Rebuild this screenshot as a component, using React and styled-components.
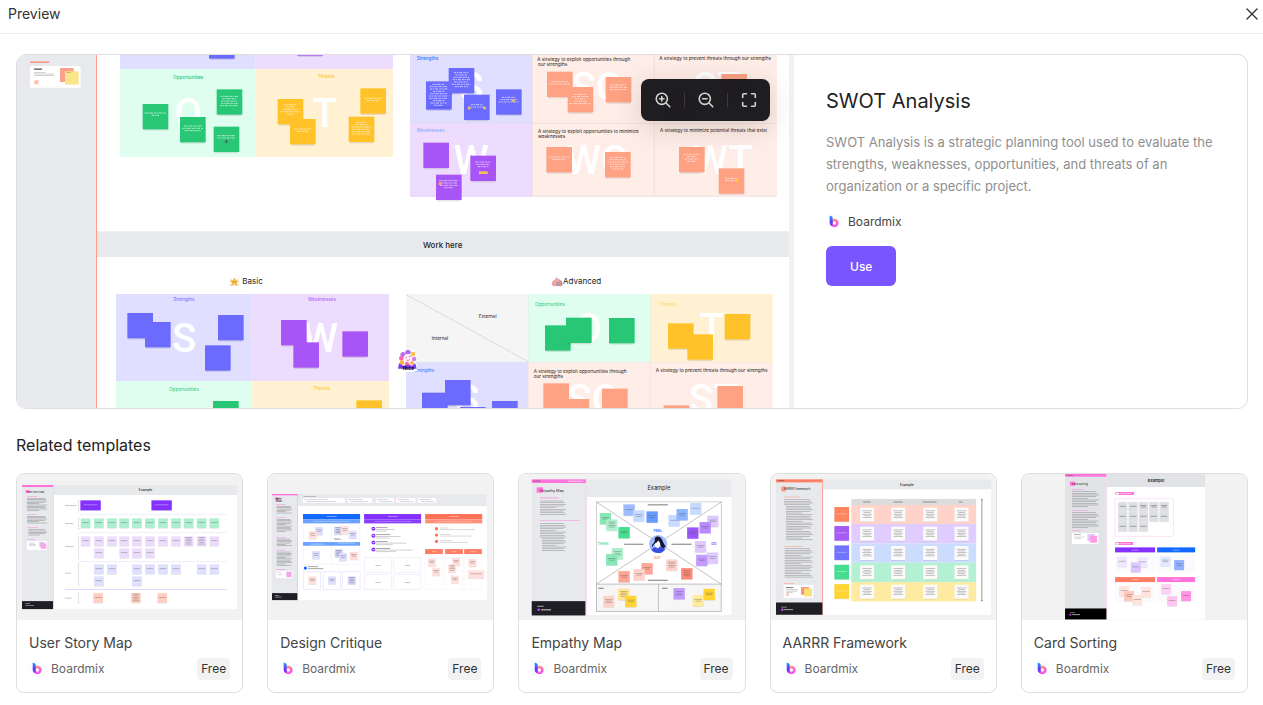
import React from "react";
import styled, { createGlobalStyle } from "styled-components";

const GlobalStyle = createGlobalStyle`
  * { box-sizing: border-box; }
  body {
    margin: 0;
    background: #fff;
    color: #222;
    font-family: Inter, "Liberation Sans", sans-serif;
  }
  button { font-family: inherit; cursor: pointer; }
  h1, h2, h3, p { margin: 0; font-weight: 400; }
  svg { display: block; }
`;

/* ---------- page parts ---------- */

const Header = styled.header`
  display: flex;
  align-items: center;
  justify-content: space-between;
  height: 34px;
  padding: 0 3px 5px 8px;
  border-bottom: 1px solid #ececec;
`;

const HeaderTitle = styled.h1`
  font-size: 14px;
  line-height: 28px;
  color: #333;
`;

const CloseButton = styled.button`
  display: flex;
  align-items: center;
  justify-content: center;
  width: 16px;
  height: 28px;
  padding: 0;
  border: 0;
  background: none;
  color: #333;
`;

const Main = styled.main`
  padding: 20px 15px 12px 16px;
`;

const Preview = styled.section`
  display: flex;
  border: 1px solid #dedede;
  border-radius: 10px;
  overflow: hidden;
`;

const BoardArea = styled.div`
  position: relative;
  flex: 1;
  min-width: 0;
  overflow: hidden;
`;

const BoardSvg = styled.svg`
  width: 100%;
  aspect-ratio: 777 / 353;
`;

const Toolbar = styled.div`
  position: absolute;
  top: 24px;
  right: 24px;
  display: flex;
  align-items: center;
  height: 42px;
  border-radius: 8px;
  background: rgba(25, 25, 29, 0.98);
  box-shadow: 0 6px 30px rgba(0, 0, 0, 0.15);
`;

const ToolButton = styled.button`
  display: flex;
  align-items: center;
  justify-content: center;
  width: 43px;
  height: 14px;
  padding: 0;
  border: 0;
  background: none;
  color: #d2d2d2;

  & + & { border-left: 1px solid #3a393c; }
`;

const Details = styled.aside`
  flex: 0 0 453px;
  padding: 32px;
`;

const DetailsTitle = styled.h2`
  font-size: 20px;
  line-height: 28px;
  color: #222;
`;

const Description = styled.p`
  margin-top: 16px;
  font-size: 13px;
  line-height: 22px;
  color: #8f8f8f;
`;

const Author = styled.div`
  display: flex;
  align-items: center;
  gap: 6px;
  font-size: 12px;
  line-height: 20px;
  color: ${(p) => (p.$soft ? "#666" : "#444")};
`;

const AuthorBlock = styled.div`
  margin: 15px 0 14px;
`;

const UseButton = styled.button`
  height: 40px;
  padding: 0 24px;
  border: 0;
  border-radius: 6px;
  background: #7855ff;
  color: #fff;
  font-size: 12px;
  font-weight: 500;
`;

const RelatedTitle = styled.h2`
  margin: 24px 0 16px;
  font-size: 16px;
  line-height: 24px;
  color: #222;
`;

const CardGrid = styled.div`
  display: grid;
  grid-template-columns: repeat(5, minmax(0, 1fr));
  gap: 24px;
`;

const Card = styled.article`
  border: 1px solid #dedede;
  border-radius: 8px;
  overflow: hidden;
`;

const ThumbSvg = styled.svg`
  width: 100%;
  aspect-ratio: 225 / 146;
  background: #f2f2f2;
`;

const CardBody = styled.div`
  padding: 12px;
`;

const CardTitle = styled.h3`
  margin-bottom: 4px;
  font-size: 14px;
  line-height: 22px;
  color: #444;
`;

const CardRow = styled.div`
  display: flex;
  align-items: center;
  justify-content: space-between;
`;

const Badge = styled.span`
  padding: 0 4px;
  border-radius: 4px;
  background: #f2f2f2;
  font-size: 12px;
  line-height: 22px;
  color: #333;
`;

/* ---------- icons ---------- */

const CloseIcon = () => (
  <svg width="12" height="12" viewBox="0 0 12 12" fill="none" stroke="currentColor" strokeWidth="1.4" strokeLinecap="round">
    <path d="M1 1l10 10M11 1L1 11" />
  </svg>
);

const ZoomIcon = ({ plus }) => (
  <svg width="16" height="16" viewBox="0 0 16 16" fill="none" stroke="currentColor" strokeWidth="1.6" strokeLinecap="round" strokeLinejoin="round">
    <circle cx="6.800" cy="6.800" r="5.600" />
    <path d={plus ? "M11 11l3.800 3.800M4.600 6.800h4.400M6.800 4.600v4.400" : "M11 11l3.800 3.800M4.600 6.800h4.400"} />
  </svg>
);

const FullscreenIcon = () => (
  <svg width="16" height="16" viewBox="0 0 16 16" fill="none" stroke="currentColor" strokeWidth="1.6" strokeLinecap="round" strokeLinejoin="round">
    <path d="M1.700 5.500V2.700q0-1 1-1h2.800M10.500 1.700h2.800q1 0 1 1v2.800M14.300 10.500v2.800q0 1-1 1h-2.800M5.500 14.300H2.700q-1 0-1-1v-2.800" />
  </svg>
);

const BoardmixLogo = () => (
  <svg width="16" height="16" viewBox="0 0 48 48" aria-hidden="true">
    <defs>
      <linearGradient id="logoStem" x1="0" y1="0" x2="0" y2="1">
        <stop offset="0" stopColor="#2196ff" />
        <stop offset="0.6" stopColor="#5b3dfa" />
        <stop offset="1" stopColor="#8a45f0" />
      </linearGradient>
      <linearGradient id="logoBowl" x1="0" y1="0" x2="0.3" y2="1">
        <stop offset="0" stopColor="#ff9a6b" />
        <stop offset="0.5" stopColor="#ff66c4" />
        <stop offset="1" stopColor="#f45be8" />
      </linearGradient>
    </defs>
    <circle cx="24" cy="24" r="22.500" fill="#fff" stroke="#f2f2f2" strokeWidth="2" />
    <circle cx="25" cy="27" r="9" fill="none" stroke="url(#logoBowl)" strokeWidth="8" />
    <path d="M11 5q9 0 9 8v19q-2 4-4 4q-5-3-5-9z" fill="url(#logoStem)" />
  </svg>
);

/* ---------- drawing helpers ---------- */

const BLUE = "#6b6bff";
const GREEN = "#28c776";
const YELLOW = "#ffc329";
const PURPLE = "#a855f7";
const CORAL = "#ffa183";

const Box = ({ a, f, r = 0, s, o }) => (
  <rect x={a[0]} y={a[1]} width={a[2]} height={a[3]} fill={f} rx={r} stroke={s} opacity={o} strokeWidth={s ? 2 : 0} />
);

/* Rows of greeked copy: left aligned, or centred on x when mid is set. */
const Lines = ({ x, y, w, gap = 6, h = 3, c = "#777", o = 0.6, mid }) => (
  <g fill={c} opacity={o}>
    {w.map((n, i) => (
      <rect key={i} x={mid ? x - n / 2 : x} y={y + i * gap} width={n} height={h} />
    ))}
  </g>
);

const Sticky = ({ x, y, c, w = [], t = 20 }) => (
  <g>
    <rect x={x + 3} y={y + 4} width="71" height="76" fill="#000" opacity="0.1" />
    <rect x={x} y={y} width="77" height="76" fill={c} />
    <g stroke="#fff" strokeOpacity="0.6" strokeWidth="3" strokeDasharray="7 2 4 2 10 3">
      {w.map((n, i) => (
        <path key={i} d={`M${x + 38 - n / 2} ${y + t + i * 7}h${n}`} />
      ))}
    </g>
  </g>
);

const Mark = ({ x, y, children }) => (
  <text x={x} y={y} fontFamily="Roboto, sans-serif" fontSize="120" fontWeight="500" fill="#fff" textAnchor="middle">{children}</text>
);

const Label = ({ x, y, c = "#222", size = 14, weight = 400, children }) => (
  <text x={x} y={y} fontSize={size} fontWeight={weight} fill={c}>{children}</text>
);

const Notes = ({ items, w = 30, h = w, text = "#555" }) => (
  <g>
    {items.map(([x, y, c, n = 2], i) => (
      <g key={i}>
        <rect x={x + 1} y={y + 2} width={w - 2} height={h} fill="#000" opacity="0.1" />
        <rect x={x} y={y} width={w} height={h} fill={c} />
        <Lines mid x={x + w / 2} y={y + h / 2 - n * 2.5} w={Array.from({ length: n }, (_, k) => w * (k % 2 ? 0.5 : 0.68))} gap={5} h={2} c={text} o={0.5} />
      </g>
    ))}
  </g>
);

/* ---------- main board ---------- */

function Board() {
  return (
    <BoardSvg viewBox="51 165 2331 1059" preserveAspectRatio="xMinYMin slice" role="img" aria-label="SWOT Analysis board">
      <Box a={[51, 165, 2334, 1059]} f="#fff" />
      <Box a={[51, 165, 237, 1059]} f="#e8e9ed" />
      <Box a={[288, 165, 3, 1059]} f="#ff9d8a" />
      <Box a={[2367, 165, 15, 1059]} f="#f2f2f3" />

      <g transform="translate(0 120)">
        <Lines x={90} y={64} w={[58]} h={5} c="#ff7a63" o={0.7} />
        <Box a={[90, 78, 152, 65]} f="#fff" r={5} />
        <Lines x={102} y={85} w={[24]} h={5} c="#222" />
        <Lines x={102} y={97} w={[34, 61, 60]} h={2} gap={4} o={0.5} />
        <Box a={[102, 120, 14, 14]} f="#ffd5cc" />
        <Box a={[107, 125, 5, 4]} f="#ff8f78" />
        <Box a={[180, 84, 41, 42]} f="#ffa08d" />
        <Box a={[195, 94, 41, 40]} f="#fbe58a" />
        <Lines x={199} y={97} w={[14]} h={2} c="#8a7a30" />

        <Box a={[360, 30, 407, 57]} f="#e0dfff" />
        <Box a={[767, 30, 412, 57]} f="#eddcfd" />
        <Box a={[360, 87, 407, 264]} f="#e0fef0" />
        <Box a={[767, 87, 412, 264]} f="#fff1d2" />
        <Sticky x={627} y={-20} c={BLUE} />
        <Sticky x={892} y={-29} c={PURPLE} />
        <Label x={519} y={118} c={GREEN} weight={500}>Opportunities</Label>
        <Label x={953} y={113} c={YELLOW} weight={500}>Threats</Label>
        <Mark x={564} y={261}>O</Mark>
        <Mark x={974} y={261}>T</Mark>
        <Sticky x={428} y={192} c={GREEN} w={[64, 22]} t={27} />
        <Sticky x={540} y={231} c={GREEN} w={[52, 62, 48]} t={27} />
        <Sticky x={650} y={148} c={GREEN} w={[54, 42, 48, 50, 56]} t={21} />
        <Sticky x={641} y={260} c={GREEN} w={[56, 54]} t={27} />
        <path d="M677 300h4v5l4 3h-12l4-3z" fill="#555" />
        <Sticky x={833} y={177} c={YELLOW} w={[38, 24, 46, 60, 20]} t={17} />
        <Sticky x={870} y={237} c={YELLOW} w={[50, 36]} t={30} />
        <Sticky x={1081} y={145} c={YELLOW} w={[50, 38]} t={30} />
        <Sticky x={1046} y={230} c={YELLOW} w={[30, 38, 60, 58, 54, 58]} t={17} />
      </g>

      <g transform="translate(1200 120)">
        <Box a={[30, 30, 366, 220]} f="#e0dfff" />
        <Box a={[30, 250, 366, 220]} f="#eddcfd" />
        <Box a={[396, 30, 735, 440]} f="#ffede7" />
        <path d="M30 250H1131M396 30V470M763 30V470M30 469H1131" stroke="#b9a9c9" strokeOpacity="0.3" strokeWidth="2" fill="none" />
        <Label x={50} y={61} c="#2a78ff" weight={500}>Strengths</Label>
        <Label x={50} y={277} c="#7ea3f5">Weaknesses</Label>
        <Mark x={213} y={184}>S</Mark>
        <Mark x={592} y={184}>SO</Mark>
        <Mark x={952} y={184}>ST</Mark>
        <Mark x={213} y={402}>W</Mark>
        <Mark x={592} y={402}>WO</Mark>
        <Mark x={968} y={402}>WT</Mark>
        <Label x={412} y={62}>A strategy to exploit opportunities through</Label>
        <Label x={414} y={77}>our strengths</Label>
        <Label x={778} y={59}>A strategy to prevent threats through our strengths</Label>
        <Label x={414} y={278}>A strategy to exploit opportunities to minimize</Label>
        <Label x={414} y={294}>weaknesses</Label>
        <Label x={780} y={276}>A strategy to minimize potential threats that exist</Label>
        <Sticky x={78} y={133} c={BLUE} />
        <Sticky x={78} y={124} c={BLUE} w={[38, 56, 52, 34, 50, 58, 56, 34, 48, 28]} t={9} />
        <Sticky x={146} y={84} c={BLUE} w={[44, 36, 48, 52, 44, 58, 40]} t={14} />
        <Sticky x={192} y={164} c={BLUE} w={[34, 54]} t={30} />
        <Box a={[204, 202, 8, 6]} f="#ffc93c" />
        <Box a={[250, 202, 8, 6]} f="#ffc93c" />
        <Sticky x={288} y={148} c={BLUE} w={[40, 48, 60]} t={24} />
        <Box a={[336, 179, 8, 6]} f="#ffc93c" />
        <Sticky x={441} y={95} c={CORAL} w={[50, 62]} t={30} />
        <Sticky x={503} y={141} c={CORAL} w={[38, 50, 32, 40, 66]} t={22} />
        <Sticky x={617} y={111} c={CORAL} w={[46, 54, 50]} t={24} />
        <Sticky x={964} y={102} c={CORAL} />
        <Sticky x={804} y={159} c={CORAL} />
        <Sticky x={70} y={308} c={PURPLE} />
        <Sticky x={108} y={404} c={PURPLE} w={[58, 56, 52, 26]} t={18} />
        <Box a={[116, 427, 9, 8]} f="#ffb03c" />
        <Sticky x={211} y={347} c={PURPLE} w={[46, 40, 32]} t={19} />
        <Box a={[237, 394, 26, 8]} f="#f3c05c" />
        <Sticky x={439} y={321} c={CORAL} w={[60, 40]} t={30} />
        <Sticky x={615} y={336} c={CORAL} w={[46, 50, 62, 46, 46, 34]} t={16} />
        <Sticky x={837} y={321} c={CORAL} w={[48, 28, 42, 28]} t={22} />
        <Sticky x={956} y={385} c={CORAL} w={[38, 36]} t={30} />
        <circle cx="1011" cy="422" r="5" fill="#ffc93c" />
      </g>

      <Box a={[291, 694, 2076, 77]} f="#e8e9ed" />

      <g transform="translate(0 660)">
        <path d="M703 174l3.500 8 9 1-7 5 3 9-8.500-4.500-8.500 4.500 3-9-7-5 9-1z" fill="#fbc43c" stroke="#e5ad45" strokeWidth="2" />
        <path d="M700 184v3M707 184v3" stroke="#432" strokeWidth="2" />
        <path d="M692 176l3 3M714 176l-3 3M690 196l4-3M716 196l-4-3" stroke="#c9a25a" strokeWidth="2" />
        <Label x={727} y={192} size={24}>Basic</Label>
        <Box a={[348, 222, 407, 261]} f="#e0dfff" />
        <Box a={[755, 222, 412, 261]} f="#eddcfd" />
        <Box a={[348, 483, 407, 90]} f="#e0fef0" />
        <Box a={[755, 483, 412, 90]} f="#fff1d2" />
        <Label x={520} y={242} c={BLUE}>Strengths</Label>
        <Label x={924} y={242} c={PURPLE}>Weaknesses</Label>
        <Label x={507} y={513} c={GREEN}>Opportunities</Label>
        <Label x={940} y={510} c={YELLOW}>Threats</Label>
        <Mark x={552} y={395}>S</Mark>
        <Mark x={961} y={395}>W</Mark>
        <Sticky x={382} y={279} c={BLUE} />
        <Sticky x={435} y={306} c={BLUE} />
        <Sticky x={654} y={285} c={BLUE} />
        <Sticky x={615} y={376} c={BLUE} />
        <Sticky x={843} y={300} c={PURPLE} />
        <Sticky x={880} y={367} c={PURPLE} />
        <Sticky x={1027} y={334} c={PURPLE} />
        <Sticky x={639} y={543} c={GREEN} />
        <Sticky x={1069} y={541} c={YELLOW} />
      </g>

      <g transform="translate(1185 660)">
        <Label x={84} y={83} size={24} weight={500}>Work here</Label>
        <path d="M472 192q2-12 9-13l4-6 7 8q8 3 9 9v7h-27z" fill="#f2a7a0" stroke="#c98a90" strokeWidth="2" />
        <path d="M486 188h9v6h-9z" fill="#dfe4ff" stroke="#6b5d98" strokeWidth="2" />
        <path d="M493 179l6 4 2 14" stroke="#4b3d78" strokeWidth="2" strokeDasharray="4 3" fill="none" />
        <Label x={504} y={192} size={24}>Advanced</Label>
        <Box a={[33, 222, 367, 205]} f="#f5f5f5" />
        <path d="M36 225L398 424" stroke="#b5b5b5" strokeWidth="2" strokeDasharray="5 3" />
        <Box a={[400, 222, 367, 205]} f="#e0fef0" />
        <Box a={[767, 222, 366, 205]} f="#fff1d2" />
        <Box a={[33, 427, 367, 140]} f="#e0dfff" />
        <Box a={[400, 427, 733, 140]} f="#ffede7" />
        <path d="M400 222V567M766 222V567M33 427H1133" stroke="#b9a9c9" strokeOpacity="0.2" strokeWidth="2" fill="none" />
        <Label x={251} y={294}>External</Label>
        <Label x={110} y={361}>Internal</Label>
        <Label x={420} y={259} c={GREEN}>Opportunities</Label>
        <Label x={794} y={258} c="#ffd76b">Threats</Label>
        <Label x={54} y={457} c="#2a78ff">Strengths</Label>
        <Mark x={579} y={367}>O</Mark>
        <Mark x={950} y={367}>T</Mark>
        <Mark x={216} y={580}>S</Mark>
        <Mark x={595} y={580}>SO</Mark>
        <Mark x={955} y={580}>ST</Mark>
        <Label x={416} y={458}>A strategy to exploit opportunities through</Label>
        <Label x={416} y={473}>our strengths</Label>
        <Label x={782} y={455}>A strategy to prevent threats through our strengths</Label>
        <Sticky x={450} y={316} c={GREEN} />
        <Sticky x={513} y={293} c={GREEN} />
        <Sticky x={642} y={294} c={GREEN} />
        <Sticky x={819} y={310} c={YELLOW} />
        <Sticky x={877} y={343} c={YELLOW} />
        <Sticky x={989} y={282} c={YELLOW} />
        <Sticky x={81} y={518} c={BLUE} />
        <Sticky x={150} y={480} c={BLUE} />
        <Sticky x={195} y={561} c={BLUE} />
        <Sticky x={291} y={543} c={BLUE} />
        <Sticky x={445} y={490} c={CORAL} />
        <Sticky x={506} y={537} c={CORAL} />
        <Sticky x={621} y={506} c={CORAL} />
        <Sticky x={806} y={556} c={CORAL} />
        <Sticky x={967} y={498} c={CORAL} />
        <g>
          <path d="M22 392l16-6 18 4 8 14-1 18 4 30-12 4H12l-4-10 1-16 4-24z" fill="#fff" />
          <circle cx="24" cy="404" r="8" fill="#c070ee" />
          <circle cx="39" cy="397" r="8" fill="#b06af0" />
          <circle cx="54" cy="402" r="7" fill="#ffc04a" />
          <circle cx="19" cy="415" r="7" fill="#ff64a8" />
          <circle cx="21" cy="428" r="7" fill="#ffb347" />
          <circle cx="57" cy="417" r="7" fill="#d37cf0" />
          <circle cx="39" cy="415" r="13" fill="#fff4fb" />
          <path d="M31 414l5-2M42 410l7-2M34 420q6 4 11-2" stroke="#f04e98" strokeWidth="2.500" fill="none" />
          <path d="M9 446l3-16 14 8 12-8 12 8 11-8 4 16z" fill="#7b3bf0" />
          <circle cx="36" cy="431" r="6" fill="#ff64a8" />
          <circle cx="51" cy="429" r="6" fill="#ffb347" />
          <text x="40" y="449" fontSize="15" fontWeight="800" fill="#17142e" textAnchor="middle">Nice</text>
        </g>
      </g>
    </BoardSvg>
  );
}

/* ---------- thumbnails ---------- */

const Thumb = ({ left, label, children }) => (
  <ThumbSvg viewBox={`${left} 27 675 438`} preserveAspectRatio="xMidYMid slice" role="img" aria-label={label}>
    {children}
  </ThumbSvg>
);

const PINK = "#ff73dc";
const para = (n, w) => Array.from({ length: n }, (_, i) => w * (i % 5 === 4 ? 0.6 : 0.9 + (i % 3) * 0.05));

function StoryMapThumb() {
  const cols = [242, 282, 321, 358, 396, 435, 474, 513, 551, 590, 628];
  return (
    <Thumb left={51} label="User Story Map preview">
      <Box a={[66, 60, 645, 372]} f="#fff" />
      <Box a={[66, 60, 93, 348]} f="#e8e9ed" />
      <Box a={[66, 60, 94, 6]} f={PINK} />
      <Box a={[159, 60, 2, 372]} f="#ffb6ee" />
      <Box a={[66, 408, 93, 24]} f="#1f1e24" />
      <Lines x={76} y={414} w={[14, 26]} c="#fff" gap={6} h={2} />
      <Box a={[162, 60, 549, 30]} f="#e8e9ed" />
      <Label x={416} y={78} size={10} weight={500}>Example</Label>
      <Box a={[77, 75, 11, 9]} f={PINK} />
      <Label x={81} y={83} size={7}>User Story Map</Label>
      <Lines x={81} y={93} w={[30]} c={PINK} h={2} />
      <Lines x={81} y={99} w={para(10, 60)} gap={4} h={2} />
      <Lines x={81} y={148} w={[28]} c={PINK} h={2} />
      <Lines x={81} y={153} w={para(6, 60)} gap={4} h={2} />
      <Lines x={81} y={187} w={[34]} c={PINK} h={2} />
      <Lines x={85} y={193} w={para(5, 56)} gap={4} h={2} />
      <Lines x={81} y={222} w={[24]} c={PINK} h={2} />
      <Box a={[81, 228, 60, 27]} f="#fff" />
      <Lines x={87} y={233} w={[16, 22, 18]} gap={4} h={2} o={0.4} />
      <Box a={[118, 231, 15, 15]} f="#d9c2f7" />
      <Box a={[122, 235, 17, 16]} f="#ffa5e8" />
      {[[121, 34], [174, 24], [244, 26], [323, 18], [398, 20]].map(([y, w]) => (
        <Lines key={y} x={195} y={y} w={[w]} h={2} />
      ))}
      {[[106, 30], [160, 32], [214, 66], [296, 64], [384, 30]].map(([y, h]) => (
        <path key={y} d={`M239 ${y}h-4v${h}h4`} fill="none" stroke="#c4c4cc" strokeWidth="1.500" />
      ))}
      {[149, 203, 289].map((y) => (
        <Box key={y} a={[236, y, 444, 1]} f="#cfcaf0" />
      ))}
      <Box a={[195, 372, 485, 2]} f="#cdc6ff" />
      <Notes items={[[241, 106, "#8430ff", 1], [454, 106, "#8430ff", 1]]} w={61} h={30} text="#fff" />
      <Notes items={cols.map((x) => [x, 160, "#aeefcf", 1])} w={29} />
      <Notes items={cols.map((x, i) => [x, 214, "#ecdcfc", i === 8 || i === 9 ? 5 : 1])} w={29} />
      <Notes items={[1, 3, 4, 5].map((i) => [cols[i], 250, "#ecdcfc", 1])} w={29} />
      <Notes items={[1, 2, 4, 5, 6, 7, 9, 10].map((i) => [cols[i], 298, "#dfdffe", 1])} w={29} />
      <Notes items={[1, 4].map((i) => [cols[i], 334, "#dfdffe", 1])} w={29} />
      <Notes items={[[280, 384, "#ffcfc2", 1], [393, 384, "#ffcfc2", 5], [472, 384, "#ffcfc2", 1]]} w={29} />
    </Thumb>
  );
}

function CritiqueThumb() {
  return (
    <Thumb left={39} label="Design Critique preview">
      <Box a={[51, 87, 644, 318]} f="#fff" />
      <Box a={[51, 87, 76, 297]} f="#e8e9ed" />
      <Box a={[51, 87, 77, 4]} f={PINK} />
      <Box a={[126, 87, 2, 318]} f="#ffa9ea" />
      <Box a={[51, 384, 76, 21]} f="#1f1e24" />
      <Lines x={60} y={390} w={[12, 20]} c="#fff" gap={5} h={2} />
      <Box a={[60, 97, 10, 9]} f={PINK} />
      <Lines x={63} y={99} w={[16, 18]} c="#222" h={4} gap={7} />
      {[[118, 123, 6], [156, 162, 10], [216, 221, 6], [254, 260, 11], [312, 317, 0]].map(([y, b, n]) => (
        <g key={y}>
          <Lines x={64} y={y} w={[28]} c={PINK} h={2} />
          <Lines x={65} y={b} w={para(n, 46)} gap={4} h={2} />
        </g>
      ))}
      <Box a={[63, 318, 50, 21]} f="#fff" />
      <Lines x={68} y={322} w={[12, 14]} h={2} o={0.4} />
      <Box a={[94, 320, 16, 16]} f="#f4a5ee" />
      <Box a={[129, 87, 566, 36]} f="#e8e9ed" />
      <Lines x={145} y={93} w={[38]} h={2} />
      {[[144, 126], [277, 74], [362, 54], [423, 58], [488, 55]].map(([x, w]) => (
        <g key={x}>
          <Box a={[x, 99, w, 14]} f="#fff" />
          <Box a={[x + 5, 102, 3, 3]} f={PINK} />
          <Lines x={x + 10} y={103} w={[w * 0.5, w * 0.7]} gap={5} h={2} o={0.4} />
        </g>
      ))}
      {[[144, "#1268ff", "#6ba2ff"], [327, "#8430ff", "#8a3dfa"], [510, "#ff7058", "#ff8f78"]].map(([x, a, b]) => (
        <g key={x}>
          <Box a={[x, 147, 171, 16]} f={a} />
          <Box a={[x, 163, 171, 12]} f={b} />
          <Lines mid x={x + 86} y={154} w={[30]} c="#fff" h={2} />
          <Lines mid x={x + 86} y={169} w={[110]} c="#fff" h={2} o={0.4} />
        </g>
      ))}
      <path d="M145 175V298H314V175M229 175V298" fill="none" stroke="#f0f0f8" strokeWidth="2" />
      <Box a={[144, 231, 171, 11]} f="#6ba2ff" />
      <Lines x={166} y={236} w={[42]} c="#fff" h={2} />
      <Lines x={246} y={233} w={[52]} c="#fff" h={2} />
      <Notes items={[[180, 186, "#dfdffe"], [161, 198, "#ffe0dc"], [237, 185, "#d5d5fa", 4], [257, 183, "#ffe0dc"], [281, 197, "#dfdffe"], [171, 258, "#dfdffe"], [239, 253, "#cfcffb", 4], [252, 264, "#dfdffe"], [284, 260, "#ffdcd8"]]} w={24} />
      <Lines x={237} y={219} w={[16, 22]} h={2} gap={4} />
      <circle cx="151" cy="309" r="5" fill="#1268ff" />
      <Lines x={159} y={304} w={[30, 46]} h={2} gap={6} c="#222" />
      {[145, 204, 263].map((x) => <Box key={x} a={[x, 320, 52, 53]} f="#fff" s="#e4e1fc" />)}
      <Notes items={[[160, 334, "#ffe0dc"], [219, 334, "#dfdffe"], [278, 334, "#d5d5fa", 4]]} w={24} />
      {[191, 212, 232, 253].map((y, i) => (
        <g key={y}>
          <circle cx="355" cy={y} r="6" fill="#8430ff" />
          <Box a={[352, y - 1, 6, 2]} f="#fff" />
          <Lines x={363} y={y - 4} w={[34 + (i % 2) * 8]} h={2} c="#222" />
          <Lines x={363} y={y + 1} w={[55 + i * 18, 30 + i * 10]} gap={5} h={2} o={0.5} />
        </g>
      ))}
      {[[328, 278], [416, 278], [328, 329], [416, 329]].map(([x, y]) => (
        <g key={`${x}-${y}`}>
          <Box a={[x, y, 81, 44]} f="#fff" s="#eee7fd" />
          <Lines mid x={x + 41} y={y + 22} w={[16]} h={2} />
        </g>
      ))}
      {[191, 210, 229].map((y, i) => (
        <g key={y}>
          <circle cx="544" cy={y} r="5" fill="#ff7058" />
          <Lines x={554} y={y - 3} w={[26 + i * 6, 105 - i * 10]} gap={5} h={2} o={0.4} />
        </g>
      ))}
      {[[510, 53], [570, 53], [627, 53]].map(([x, w]) => (
        <g key={x}>
          <Box a={[x, 252, w, 15]} f="#ff7d64" />
          <Lines mid x={x + w / 2} y={259} w={[14]} c="#fff" h={2} />
          <Box a={[x, 268, w, 105]} f="#fff" s="#faf3f2" />
        </g>
      ))}
      <Notes items={[[518, 280, "#ffe0dc"], [531, 308, "#ffe0dc"], [591, 278, "#ffe0dc"], [579, 298, "#ffe0dc", 4], [587, 331, "#ffe0dc"], [640, 281, "#ffe0dc"]]} w={24} />
      <Notes items={[[638, 316, "#ffe0dc", 1]]} w={49} h={24} />
    </Thumb>
  );
}

function EmpathyThumb() {
  return (
    <Thumb left={27} label="Empathy Map preview">
      <Box a={[65, 43, 599, 407]} f="#fff" />
      <Box a={[65, 43, 162, 365]} f="#e8e9ed" />
      <Box a={[65, 43, 163, 11]} f={PINK} />
      <Lines x={70} y={47} w={[22]} c="#222" h={2} />
      <Lines x={174} y={47} w={[46]} c="#fff" h={3} />
      <Box a={[227, 43, 2, 408]} f="#f0a8e2" />
      <Box a={[65, 408, 161, 43]} f="#1f1e24" />
      <Lines x={81} y={422} w={[20]} c="#fff" h={3} />
      <circle cx="86" cy="434" r="4" fill="#b44df5" />
      <Lines x={93} y={432} w={[30]} c="#fff" h={4} />
      <Box a={[80, 67, 19, 16]} f={PINK} />
      <Label x={90} y={81} size={11}>Empathy Map</Label>
      <Lines x={90} y={97} w={[56]} c={PINK} />
      <Lines x={90} y={107} w={para(9, 78)} gap={5} h={2} />
      <Lines x={90} y={165} w={[120]} c={PINK} h={2} />
      <Lines x={90} y={175} w={para(9, 78)} gap={5} h={2} />
      <Lines x={96} y={220} w={para(8, 72)} gap={5} h={2} />
      <Box a={[229, 43, 435, 53]} f="#e8e9ed" />
      <Label x={412} y={76} size={17}>Example</Label>
      <Box a={[259, 111, 374, 328]} f="#f6f6f6" s="#a4a4a4" />
      <Box a={[260, 112, 372, 245]} f="#fff" />
      <path d="M259 111L633 357M633 111L259 357M259 357H633M445 357V439" stroke="#a4a4a4" strokeWidth="2" fill="none" />
      <Lines mid x={443} y={118} w={[60]} c="#222" />
      <Lines mid x={371} y={236} w={[58]} c="#222" />
      <Lines mid x={514} y={236} w={[60]} c="#222" />
      <Lines mid x={443} y={344} w={[60]} c="#222" />
      <Label x={430} y={201} size={11} weight={600} c="#2d6bff">FEEL</Label>
      <Label x={262} y={241} size={11} weight={600} c="#5fd99b">THINK</Label>
      <Label x={603} y={241} size={11} weight={600} c="#9a4dff">DO</Label>
      <Label x={432} y={282} size={10} weight={600} c="#ff8d78">SAY</Label>
      <Lines x={265} y={368} w={[16]} c="#222" />
      <Lines x={456} y={368} w={[16]} c="#222" />
      <Notes
        w={34}
        items={[
          [340, 118, "#9cbcff", 1], [369, 136, "#c6dbff"], [409, 139, "#659bff"], [475, 150, "#c6dbff", 1], [499, 132, "#8fb4ff"], [540, 114, "#c6dbff", 1],
          [269, 144, "#86e8b5"], [288, 163, "#aef0cd", 4], [325, 186, "#46de90"], [305, 249, "#aef0cd", 3], [288, 267, "#86e8b5"],
          [591, 152, "#dfc9ff"], [568, 171, "#b98bff"], [531, 187, "#9a55fb"], [554, 228, "#dfc9ff"], [590, 262, "#dfc9ff"], [558, 269, "#c49bff"],
          [394, 294, "#ffa797"], [370, 312, "#ffd3ca"], [325, 318, "#ffa797"], [468, 283, "#ffd3ca", 4], [513, 309, "#ff8b78", 4],
          [279, 392, "#ffd3ca", 3], [324, 371, "#ffe58d", 4], [345, 392, "#ffd433"], [490, 369, "#c49bff", 3], [547, 390, "#ffec9f"], [580, 371, "#ffd433"],
        ]}
      />
      <circle cx="444" cy="237" r="27" fill="#9dbcff" />
      <path d="M424 255q4-10 20-9q17-1 21 7q-8 11-20 11q-14 0-21-9z" fill="#3a4fe0" />
      <path d="M436 226l12-2 3 16-7 10-10-6z" fill="#fff" />
      <path d="M434 228q-2-14 8-14q10 0 14 11q4 10 11 21l-8 3q-9-3-9-14q-2-8-6-9q-3 7-8 8q-6 4-9 12q-4-4 1-9q5-3 6-9z" fill="#14152b" />
    </Thumb>
  );
}

function FrameworkThumb() {
  const rows = [
    [120, "#ffd3ca", "#ff8660"],
    [177, "#e0ccff", "#a45cf5"],
    [235, "#cbdcff", "#6f74ff"],
    [293, "#b3f1d2", "#46de90"],
    [351, "#ffeaa2", "#ffd433"],
  ];
  return (
    <Thumb left={33} label="AARRR Framework preview">
      <Box a={[48, 43, 645, 406]} f="#fff" />
      <Box a={[48, 43, 139, 369]} f="#e8e9ed" />
      <Box a={[48, 43, 140, 9]} f="#ff8066" />
      <Lines x={54} y={46} w={[18]} c="#333" h={2} />
      <Box a={[186, 43, 3, 406]} f="#f5a596" />
      <Box a={[48, 412, 139, 37]} f="#1f1e24" />
      <Lines x={63} y={425} w={[18]} c="#fff" h={2} />
      <circle cx="67" cy="434" r="4" fill="#b44df5" />
      <Lines x={72} y={432} w={[27]} c="#fff" />
      <circle cx="71" cy="72" r="8" fill="#ff9b80" />
      <Label x={71} y={76} size={9}>AARRR Framework</Label>
      <Lines x={71} y={95} w={[50]} c="#ff8066" h={2} />
      <Lines x={72} y={103} w={para(4, 86)} gap={5} h={2} />
      <Lines x={78} y={123} w={para(21, 80)} gap={5} h={2} />
      <Lines x={71} y={243} w={[56]} c="#ff8066" h={2} />
      <Lines x={74} y={250} w={para(18, 84)} gap={5} h={2} />
      <Lines x={71} y={354} w={[32]} c="#ff8066" h={2} />
      <Box a={[71, 360, 89, 39]} f="#fff" r={2} />
      <Lines x={78} y={366} w={[22]} c="#222" />
      <Lines x={78} y={373} w={[36, 34, 20]} gap={4} h={2} o={0.5} />
      <Box a={[79, 385, 7, 7]} f="#ffb3a2" />
      <Box a={[123, 366, 24, 23]} f="#ff9078" />
      <Box a={[132, 370, 24, 24]} f="#fbdf78" />
      <Box a={[189, 43, 504, 30]} f="#e8e9ed" />
      <Label x={420} y={62} size={10} weight={500}>Example</Label>
      <Box a={[274, 102, 374, 18]} f="#dcdcdc" />
      {[320, 414, 508, 602].map((x, i) => <Lines key={x} mid x={x} y={110} w={[[22, 28, 42, 12][i]]} c="#222" h={2} />)}
      {rows.map(([y, bg]) => <Box key={y} a={[274, y, 374, 58]} f={bg} />)}
      <Notes w={44} text="#fff" items={rows.map(([y, , c]) => [223, y + 6, c, 1])} />
      {rows.map(([y]) => (
        <Notes key={y} w={42} text="#555" items={[300, 393, 489, 583].map((x) => [x, y + 8, "#fbfbfb", 5])} />
      ))}
      <path d="M665 101V408" stroke="#b4b4b4" strokeWidth="4" />
      <path d="M665 101l-4 5h8zM665 410l-4-5h8z" fill="#999" />
    </Thumb>
  );
}

function CardSortingThumb() {
  const grid = [];
  [5, 5, 3].forEach((n, r) => {
    for (let i = 0; i < n; i += 1) grid.push([324 + i * 31, 111 + r * 30, "#dfe0e4", r === 0 && i > 1 ? 2 : 1]);
  });
  return (
    <Thumb left={36} label="Card Sorting preview">
      <Box a={[165, 27, 420, 436]} f="#fff" />
      <Box a={[165, 27, 124, 403]} f="#e2e3e7" />
      <Box a={[165, 27, 125, 8]} f={PINK} />
      <Lines x={170} y={30} w={[18]} c="#333" h={2} />
      <Box a={[289, 27, 2, 436]} f="#f3c9ec" />
      <Box a={[165, 430, 124, 33]} f="#000" />
      <Lines x={180} y={442} w={[15]} c="#fff" h={2} />
      <circle cx="181" cy="449" r="3" fill="#b44df5" />
      <Lines x={186} y={447} w={[24]} c="#fff" />
      <Box a={[180, 50, 15, 12]} f={PINK} />
      <Label x={186} y={60} size={8}>Card Sorting</Label>
      <Lines x={186} y={72} w={[36]} c={PINK} h={2} />
      <Lines x={186} y={79} w={para(10, 80)} gap={5} h={2} />
      <Lines x={186} y={135} w={[50]} c={PINK} h={2} />
      <Lines x={186} y={142} w={para(10, 80)} gap={5} h={2} />
      <Lines x={186} y={196} w={[28]} c={PINK} h={2} />
      <Box a={[186, 204, 79, 33]} f="#fff" />
      <Lines x={192} y={208} w={[20]} c="#333" h={2} />
      <Lines x={192} y={215} w={[32, 22]} gap={5} h={2} o={0.4} />
      <Box a={[232, 207, 22, 22]} f="#dfc9ff" />
      <Box a={[240, 212, 21, 21]} f="#ff9ce8" />
      <Box a={[291, 27, 294, 39]} f="#e2e3e7" />
      <Label x={413} y={51} size={12} weight={600}>Example</Label>
      {[[81, 57], [231, 54]].map(([y, w]) => (
        <g key={y}>
          <Box a={[315, y, w, 9]} f={PINK} r={2} />
          <Box a={[317, y + 2, 9, 6]} f="#fff" />
          <Lines x={328} y={y + 4} w={[w - 20]} c="#fff" h={2} />
        </g>
      ))}
      <Box a={[314, 101, 176, 113]} f="#fff" s="#fcd6f3" r={4} />
      <Notes w={28} items={grid} text="#222" />
      {[[315, 247, 120, "#8430ff"], [441, 247, 114, "#1268ff"], [315, 336, 120, "#ff7d64"], [441, 336, 114, PINK]].map(([x, y, w, c]) => (
        <g key={c}>
          <Box a={[x, y, w, 15]} f={c} />
          <Lines mid x={x + w / 2} y={y + 7} w={[20]} c="#fff" h={2} />
          <Box a={[x, y + 22, w, 54]} f="#fbfbfd" />
        </g>
      ))}
      <Notes
        w={30}
        items={[
          [321, 275, "#efe6ff", 1], [382, 277, "#efe6ff", 1], [362, 292, "#ddc6ff", 1], [451, 274, "#e0e9ff"], [492, 285, "#90b4ff"],
          [327, 363, "#ffe3dd", 1], [393, 366, "#ffe3dd", 1], [342, 378, "#ffcabd"], [367, 390, "#ffe3dd", 1],
          [453, 357, "#ffd0f4", 1], [471, 393, "#ffc4f0", 1], [513, 378, "#ff93e4", 1],
        ]}
      />
    </Thumb>
  );
}

const templates = [
  { name: "User Story Map", Art: StoryMapThumb },
  { name: "Design Critique", Art: CritiqueThumb },
  { name: "Empathy Map", Art: EmpathyThumb },
  { name: "AARRR Framework", Art: FrameworkThumb },
  { name: "Card Sorting", Art: CardSortingThumb },
];

export default function App() {
  return (
    <>
      <GlobalStyle />
      <Header>
        <HeaderTitle>Preview</HeaderTitle>
        <CloseButton type="button" aria-label="Close"><CloseIcon /></CloseButton>
      </Header>
      <Main>
        <Preview>
          <BoardArea>
            <Board />
            <Toolbar role="toolbar" aria-label="Board zoom">
              <ToolButton type="button" aria-label="Zoom in"><ZoomIcon plus /></ToolButton>
              <ToolButton type="button" aria-label="Zoom out"><ZoomIcon /></ToolButton>
              <ToolButton type="button" aria-label="Full screen"><FullscreenIcon /></ToolButton>
            </Toolbar>
          </BoardArea>
          <Details>
            <DetailsTitle>SWOT Analysis</DetailsTitle>
            <Description>
              SWOT Analysis is a strategic planning tool used to evaluate the strengths, weaknesses,
              opportunities, and threats of an organization or a specific project.
            </Description>
            <AuthorBlock>
              <Author><BoardmixLogo />Boardmix</Author>
            </AuthorBlock>
            <UseButton type="button">Use</UseButton>
          </Details>
        </Preview>
        <RelatedTitle>Related templates</RelatedTitle>
        <CardGrid>
          {templates.map(({ name, Art }) => (
            <Card key={name}>
              <Art />
              <CardBody>
                <CardTitle>{name}</CardTitle>
                <CardRow>
                  <Author $soft><BoardmixLogo />Boardmix</Author>
                  <Badge>Free</Badge>
                </CardRow>
              </CardBody>
            </Card>
          ))}
        </CardGrid>
      </Main>
    </>
  );
}
